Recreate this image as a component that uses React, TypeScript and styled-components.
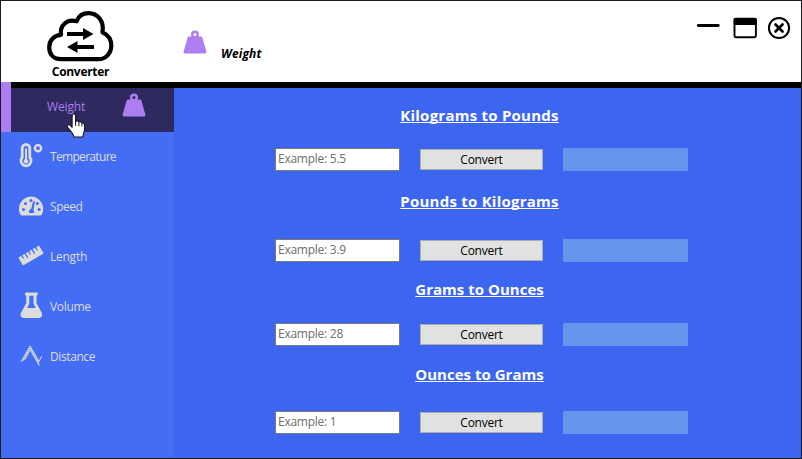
import React from "react";
import styled, { createGlobalStyle } from "styled-components";

const PURPLE = "#ac7ef1";

const GlobalStyle = createGlobalStyle`
  * { box-sizing: border-box; }
  body {
    margin: 0;
    font-family: "Open Sans", "Noto Sans", sans-serif;
    font-size: 12px;
    line-height: 16px;
  }
  svg { display: block; flex: none; overflow: visible; }
`;

const Window = styled.div`
  width: 802px;
  height: 459px;
  display: flex;
  flex-direction: column;
  overflow: hidden;
  border: 1px solid #1b1b1f;
  background: #3c65f0;
`;

const Header = styled.header`
  height: 81px;
  flex: none;
  display: flex;
  background: #fff;
`;

const Brand = styled.div`
  width: 160px;
  padding: 9px 0 0 44px;
`;

const BrandName = styled.div`
  width: 71px;
  margin-top: 1px;
  text-align: center;
  font-weight: 700;
  letter-spacing: -0.3px;
  white-space: nowrap;
`;

const Current = styled.div`
  flex: 1;
  display: flex;
  padding: 29px 0 0 22px;
`;

const CurrentName = styled.span`
  margin: 16px 0 0 14px;
  font-weight: 700;
  font-style: italic;
  letter-spacing: 0.15px;
`;

const WindowButtons = styled.div`
  display: flex;
  padding: 13px 7px 0 0;
`;

const IconButton = styled.button`
  border: 0;
  padding: 0;
  height: 30px;
  background: none;
`;

const Rule = styled.div`
  height: 6px;
  flex: none;
  background: linear-gradient(to right, ${PURPLE} 10px, #000 10px);
`;

const Body = styled.div`
  flex: 1;
  display: flex;
`;

const Sidebar = styled.nav`
  width: 173px;
  background: #446df6;
`;

const ActiveItem = styled.div`
  height: 44px;
  display: flex;
  justify-content: space-between;
  border-left: 10px solid ${PURPLE};
  padding: 5px 28px 0 36px;
  background: #2e2a5f;
  color: ${PURPLE};
`;

const ActiveLabel = styled.span`
  margin-top: 6px;
  letter-spacing: -0.15px;
`;

const Item = styled.div<{ $spacing: number }>`
  height: 50px;
  display: flex;
  align-items: center;
  gap: 3px;
  padding-left: 16px;
  color: #dcdcdc;
  letter-spacing: ${(p) => p.$spacing}px;
`;

const Main = styled.main`
  flex: 1;
  display: flex;
  flex-direction: column;
  padding-left: 101px;
`;

const Section = styled.section<{ $before: number; $between: number }>`
  width: 413px;
  padding-top: ${(p) => p.$before}px;
  display: grid;
  row-gap: ${(p) => p.$between}px;
`;

const Title = styled.h2<{ $spacing: number }>`
  margin: 0 0 0 -2px;
  height: 22px;
  width: 413px;
  text-align: center;
  font-size: 15px;
  line-height: 22px;
  font-weight: 700;
  color: #fff;
  letter-spacing: ${(p) => p.$spacing}px;
  text-decoration: underline;
  text-decoration-thickness: 1px;
  text-underline-offset: 1px;
  text-decoration-skip-ink: none;
`;

const Fields = styled.div`
  display: flex;
  align-items: center;
  gap: 20px;
`;

const Input = styled.input`
  width: 125px;
  height: 23px;
  border: 1px solid #7a7a7a;
  padding: 0 2px 2px;
  background: #fff;
  font: inherit;
  letter-spacing: -0.25px;
  &::placeholder { color: #6d6d6d; opacity: 1; }
`;

const Convert = styled.button`
  width: 123px;
  height: 21px;
  border: 1px solid #adadad;
  padding: 0;
  background: #e1e1e1;
  color: #000;
  font: inherit;
  line-height: 18px;
  letter-spacing: -0.25px;
`;

const Result = styled.output`
  width: 125px;
  height: 23px;
  background: #6495ed;
`;

const Pointer = styled.svg`
  position: absolute;
  left: 66px;
  top: 112px;
`;

const WeightIcon = () => (
  <svg width="24" height="25" viewBox="0 0 24 25">
    <circle cx="12" cy="4.5" r="2.8" fill="none" stroke={PURPLE} strokeWidth="2.5" />
    <path d="M6 6.5H18Q19 6.5 19.3 7.6L23.4 21.5Q23.9 23.6 22 23.6H2Q.1 23.6.6 21.5L4.7 7.6Q5 6.5 6 6.5Z" fill={PURPLE} />
  </svg>
);

const CloudIcon = () => (
  <svg width="72" height="53" viewBox="0 0 72 53">
    <path d="M16 49.2C8 49 4.2 43.8 4.2 37.2C4.2 30.2 9.5 25.2 16 24.9C14.5 15.5 22 8.5 31.6 11.2C34 5.2 38.7 3.2 43.5 3.2C52.5 3.2 59.5 11 57.5 22.3C63 24.8 66.3 29.5 66.3 35.5C66.3 43.5 60.5 49.2 53.5 49.2Z" fill="none" stroke="#000" strokeWidth="4.2" strokeLinejoin="round" />
    <path d="M22 22H38V18L48.5 24L38 30V26H22ZM49 35H32.5V31L22 37L32.5 43V39H49Z" fill="#000" />
  </svg>
);

const TemperatureIcon = () => (
  <svg width="30" height="28" viewBox="0 0 30 28" fill="none" stroke="#dcdcdc">
    <path d="M5.2 5.3a3.8 3.8 0 0 1 7.6 0v9.2a5 5 0 1 1-7.6 0Z" strokeWidth="2.8" />
    <path d="M9 5.5V18" strokeWidth="2" />
    <circle cx="9" cy="18.2" r="2.3" fill="#dcdcdc" stroke="none" />
    <circle cx="21" cy="5.2" r="3.1" strokeWidth="2.4" />
  </svg>
);

const SpeedIcon = () => (
  <svg width="30" height="28" viewBox="0 0 30 28">
    <path d="M3.4 21.6C1.1 17 1.5 10.6 6.3 6.5C11.2 2.5 17.2 2.5 21.9 6.5C26.5 10.6 27.2 17 24.8 21.6Q24.4 22.5 23.2 22.5H5Q3.9 22.5 3.4 21.6Z" fill="#dcdcdc" />
    <g fill="#446df6">
      <circle cx="6.5" cy="16.6" r="1.5" />
      <circle cx="8.5" cy="10.4" r="1.5" />
      <circle cx="14" cy="7.6" r="1.5" />
      <circle cx="20.3" cy="10.4" r="1.5" />
      <circle cx="22.2" cy="16.6" r="1.5" />
      <path d="M16.2 8.2L18 8.6L16.5 16.5Q18 19 16.6 20H12.2Q10.8 17.5 14.2 15.7Z" />
    </g>
  </svg>
);

const LengthIcon = () => (
  <svg width="30" height="28" viewBox="0 0 30 28">
    <g transform="rotate(-30 14 12.5)">
      <rect x="2" y="7.9" width="24" height="9.2" rx="1.1" fill="#dcdcdc" />
      <path d="M6 7V11.4M10 7V12.7M14 7V11.4M18 7V12.7M22 7V11.4" stroke="#446df6" strokeWidth="1.3" />
    </g>
  </svg>
);

const VolumeIcon = () => (
  <svg width="30" height="28" viewBox="0 0 30 28">
    <path fillRule="evenodd" d="M9 -.5H20Q20.8 -.5 20.8 .4V1.6Q20.8 2.5 19.9 2.5H19.5V10L24.7 19.7Q26.4 23.9 22.5 25H6.500Q2.300 23.900 4 19.700L9.300 10V2.500H8.900Q8 2.500 8 1.600V.400Q8 -.5 9 -.5ZM12.300 2.700V10.500L10.200 15H18.600L16.500 10.500V2.700Z" fill="#dcdcdc" />
  </svg>
);

const DistanceIcon = () => (
  <svg width="30" height="28" viewBox="0 0 30 28" fill="none" stroke="#dcdcdc" strokeWidth="1">
    <path d="M4 18.800L13 2.900L22 18.300L24.800 13.200M7.600 16.800L13.200 6.900L22.300 22.700M5.800 18L13.100 5L22.200 20.600" />
  </svg>
);

const HandPointer = () => (
  <Pointer width="20" height="27" viewBox="0 0 20 27">
    <path d="M6.1 4C6.1 1.4 9.6 1.4 9.6 4V9.8C10 8.4 12.7 8.5 12.9 10.3C13.7 9.2 15.6 9.6 15.9 11.3C17 10.6 18.5 11.3 18.5 13V17.5C18.5 20.5 17.1 21.5 16.8 25H8C7.5 21.5 3.9 18.5 1.7 15.2C.8 13.5 2.5 12.1 4 13.1L6.1 15.3Z" fill="#fff" stroke="#15151d" strokeWidth="1.1" strokeLinejoin="round" />
    <path d="M9.6 9.5V14M12.9 10.5V14.2M15.9 11.5V14.5" stroke="#15151d" strokeWidth="1" />
  </Pointer>
);

const items = [
  { label: "Temperature", spacing: -0.68, Icon: TemperatureIcon },
  { label: "Speed", spacing: -0.45, Icon: SpeedIcon },
  { label: "Length", spacing: -0.25, Icon: LengthIcon },
  { label: "Volume", spacing: -0.3, Icon: VolumeIcon },
  { label: "Distance", spacing: -0.4, Icon: DistanceIcon },
];

const sections = [
  { title: "Kilograms to Pounds", example: "5.5", before: 16, between: 22, spacing: 0.24 },
  { title: "Pounds to Kilograms", example: "3.9", before: 19, between: 27, spacing: 0.24 },
  { title: "Grams to Ounces", example: "28", before: 16, between: 23, spacing: 0.02 },
  { title: "Ounces to Grams", example: "1", before: 17, between: 26, spacing: 0.02 },
];

export default function App() {
  return (
    <>
      <GlobalStyle />
      <Window>
        <Header>
          <Brand>
            <CloudIcon />
            <BrandName>Converter</BrandName>
          </Brand>
          <Current>
            <WeightIcon />
            <CurrentName>Weight</CurrentName>
          </Current>
          <WindowButtons>
            <IconButton aria-label="Minimize">
              <svg width="36" height="30" viewBox="0 0 36 30">
                <path d="M4.3 11.5H24.2" stroke="#000" strokeWidth="2.9" strokeLinecap="round" />
              </svg>
            </IconButton>
            <IconButton aria-label="Maximize">
              <svg width="34" height="30" viewBox="0 0 34 30">
                <rect x="4.5" y="4.8" width="21.4" height="18.4" rx="1.5" fill="none" stroke="#000" strokeWidth="1.9" />
                <path d="M3.7 5Q3.7 4 4.7 4H25.7Q26.7 4 26.7 5V11H3.7Z" />
              </svg>
            </IconButton>
            <IconButton aria-label="Close">
              <svg width="30" height="30" viewBox="0 0 30 30" fill="none" stroke="#000">
                <circle cx="15" cy="14" r="10.1" strokeWidth="2" />
                <path d="M11.5 10.5L18.5 17.5M18.5 10.5L11.5 17.5" strokeWidth="2.7" strokeLinecap="round" />
              </svg>
            </IconButton>
          </WindowButtons>
        </Header>
        <Rule />
        <Body>
          <Sidebar>
            <ActiveItem>
              <ActiveLabel>Weight</ActiveLabel>
              <WeightIcon />
            </ActiveItem>
            {items.map(({ label, spacing, Icon }) => (
              <Item key={label} $spacing={spacing}>
                <Icon />
                <span>{label}</span>
              </Item>
            ))}
          </Sidebar>
          <Main>
            {sections.map((s) => (
              <Section key={s.title} $before={s.before} $between={s.between}>
                <Title $spacing={s.spacing}>{s.title}</Title>
                <Fields>
                  <Input placeholder={`Example: ${s.example}`} />
                  <Convert>Convert</Convert>
                  <Result />
                </Fields>
              </Section>
            ))}
          </Main>
        </Body>
        <HandPointer />
      </Window>
    </>
  );
}
